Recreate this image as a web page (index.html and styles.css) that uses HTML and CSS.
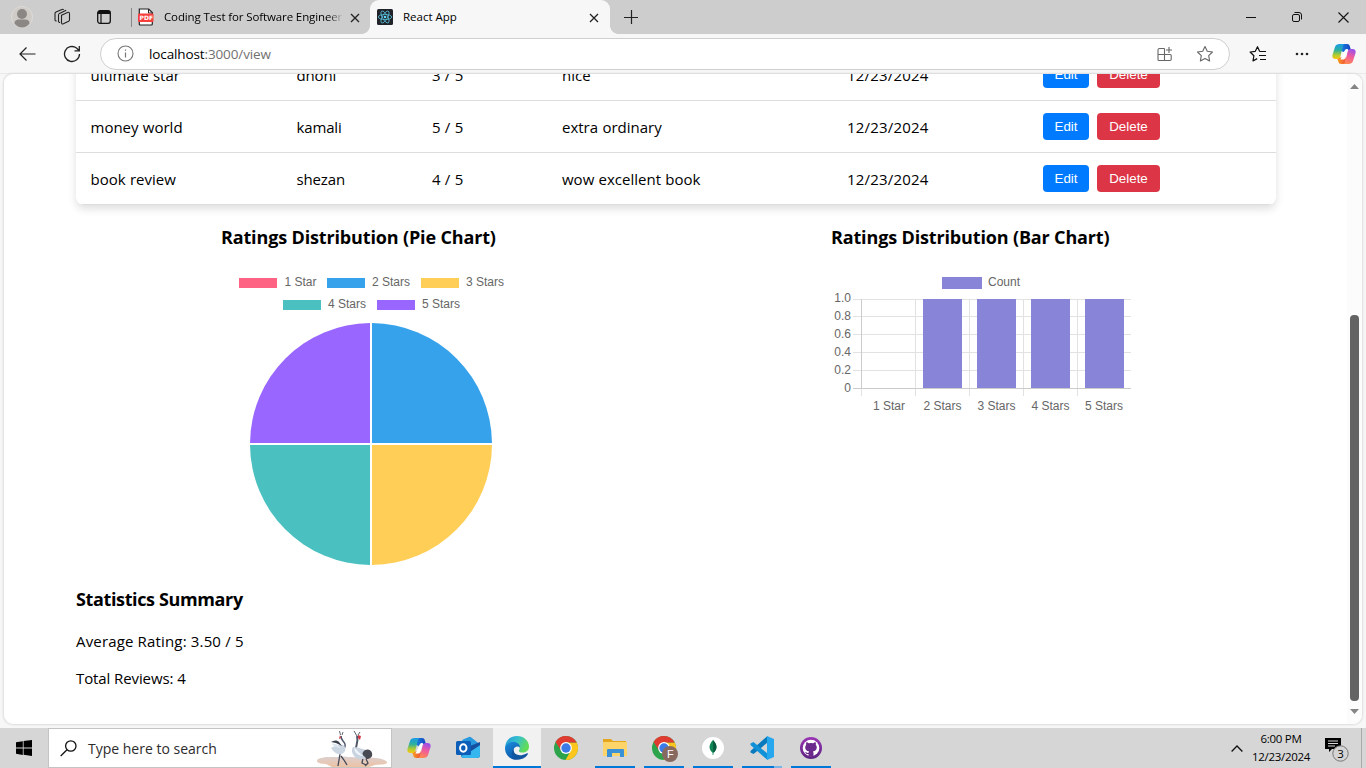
FILE: index.html
```html
<!DOCTYPE html>
<html lang="en">
<head>
<meta charset="utf-8">
<title>React App</title>
<link rel="stylesheet" href="styles.css">
</head>
<body>
<svg class="defs" width="0" height="0">
  <defs>
    <linearGradient id="cpA" x1="0" y1="0" x2="0" y2="1"><stop offset="0" stop-color="#1b9be8"/><stop offset=".4" stop-color="#2bb0a0"/><stop offset=".75" stop-color="#b6cc2c"/><stop offset="1" stop-color="#fbc512"/></linearGradient>
    <linearGradient id="cpB" x1=".6" y1="0" x2=".3" y2="1"><stop offset="0" stop-color="#9a50e8"/><stop offset=".45" stop-color="#ee5aa0"/><stop offset="1" stop-color="#ff8a4c"/></linearGradient>
    <linearGradient id="cpC" x1="0" y1="0" x2="1" y2="0"><stop offset="0" stop-color="#1a8be6"/><stop offset="1" stop-color="#1544c0"/></linearGradient>
    <linearGradient id="cpD" x1="0" y1="0" x2="1" y2="0"><stop offset="0" stop-color="#f7a01c"/><stop offset="1" stop-color="#f0503c"/></linearGradient>
    <linearGradient id="edA" x1="0" y1="0" x2="1" y2=".4"><stop offset="0" stop-color="#2394d8"/><stop offset=".5" stop-color="#35bfd0"/><stop offset="1" stop-color="#62dc58"/></linearGradient>
    <linearGradient id="edB" x1="0" y1="0" x2=".6" y2="1"><stop offset="0" stop-color="#1a8fdf"/><stop offset="1" stop-color="#0c4fa0"/></linearGradient>
    <linearGradient id="ground" x1="0" y1="0" x2="0" y2="1"><stop offset="0" stop-color="#dccfd0"/><stop offset="1" stop-color="#ecc3a4"/></linearGradient>
    <linearGradient id="ghG" x1="0" y1="0" x2="0" y2="1"><stop offset="0" stop-color="#9a35b5"/><stop offset="1" stop-color="#5c2380"/></linearGradient>
    <symbol id="copilot" viewBox="0 0 24 24">
      <path fill="url(#cpC)" d="M7 2h8c1.700 0 2.400.9 2.800 2.200L19 8h-3.500c-1.600 0-2.600.8-3 2.200L9 9z"/>
      <path fill="url(#cpD)" d="M5 16l6-1 2.200-1 .8 3-1 5H9.200c-1.700 0-2.400-.8-2.800-2.200z"/>
      <path fill="url(#cpA)" d="M7.500 2H13c-1.200.2-1.800 1.200-2.200 2.500L8.500 14c-.5 2-1.500 3-3 3h-2C.8 17-.2 15 .6 12.400L3 5C3.800 2.800 5.300 2 7.500 2z"/>
      <path fill="url(#cpB)" d="M16.500 22H11c1.200-.2 1.800-1.200 2.200-2.500L15.500 10c.5-2 1.500-3 3-3h2c2.700 0 3.700 2 2.900 4.600L21 19c-.8 2.200-2.300 3-4.500 3z"/>
      <path fill="#fff" d="M12.700 8.500c.6-1.100 1.500-1.500 3.300-1.500l-.7 2.500-1.900 6.800c-.6 1-1.200 1.200-2.600 1.200H8.300c.5-.5.900-1.300 1.200-2.300z"/>
    </symbol>
    <symbol id="chrome" viewBox="0 0 24 24">
      <circle cx="12" cy="12" r="12" fill="#2da44b"/>
      <path fill="#fcc61d" d="M12 6.500h10.700A12 12 0 0 1 11.500 24l5.300-9.200z"/>
      <path fill="#df3b30" d="M1.600 6a12 12 0 0 1 21 .5H12L7.200 14.800z"/>
      <circle cx="12" cy="12" r="5.900" fill="#fff"/><circle cx="12" cy="12" r="4.700" fill="#3b7be8"/>
    </symbol>
    <symbol id="close" viewBox="0 0 10 10"><path d="M1 1l8 8M9 1L1 9" fill="none" stroke="#222" stroke-width="1.300"/></symbol>
  </defs>
</svg>

<header class="tabstrip">
  <div class="profile"><svg width="22" height="22" viewBox="0 0 22 22"><circle cx="11" cy="11" r="10.500" fill="#cfcbc6" stroke="#dedbd7"/><circle cx="11" cy="8" r="5" fill="#8b8784"/><path d="M3.500 17.500c0-3 2-4 4-4h7c2 0 4 1 4 4-2 2.700-4.500 4-7.500 4s-5.500-1.300-7.500-4z" fill="#8b8784"/></svg></div>
  <div class="workspaces"><svg width="18" height="18" viewBox="0 0 18 18" fill="none" stroke="#222" stroke-width="1.100"><path d="M8.500 7.200l6-2.700q2-.8 2 1.200v6q0 1-.9 1.500l-5.200 2.500q-1.900.8-1.900-1.200zM5.500 13.500V7q0-1 1-1.600l6.700-3.100M5.500 13.500q.3 1.300 1.600.8M2 12V5.500Q2 4.500 3 4l6-2.600q1-.4 1.600.4M2 12q.2 1.300 1.600.8"/></svg></div>
  <div class="tabactions"><svg width="14" height="14" viewBox="0 0 14 14"><rect x=".7" y=".7" width="12.600" height="12.600" rx="2.200" fill="none" stroke="#111" stroke-width="1.300"/><path d="M1 1h12v3H1z" fill="#111"/><path d="M4 4v9" stroke="#111" stroke-width="1.200"/></svg></div>
  <div class="tab">
    <svg width="16" height="18" viewBox="0 0 16 18"><path d="M1.700 1h9l3.600 3.600V16q0 1-1 1h-11q-1 0-1-1V1z" fill="#fff" stroke="#222" stroke-width="1.200"/><path d="M10.500 1v4h4" fill="none" stroke="#222"/><rect x="0" y="5.500" width="15.500" height="8.500" rx="1" fill="#f7403d"/><text x="1.600" y="12" class="pdf-text">PDF</text></svg>
    <span class="tab-title fade">Coding Test for Software Engineer</span>
    <svg class="tab-close" width="10" height="10"><use href="#close"/></svg>
  </div>
  <div class="tab active">
    <svg width="16" height="16" viewBox="0 0 16 16"><rect width="16" height="16" rx="1.500" fill="#20232a"/><g fill="none" stroke="#55b9d3" stroke-width=".85"><ellipse cx="8" cy="8" rx="6.700" ry="2.600"/><ellipse cx="8" cy="8" rx="6.700" ry="2.600" transform="rotate(60 8 8)"/><ellipse cx="8" cy="8" rx="6.700" ry="2.600" transform="rotate(120 8 8)"/></g><circle cx="8" cy="8" r="1.300" fill="#61dafb"/></svg>
    <span class="tab-title">React App</span>
    <svg class="tab-close" width="10" height="10"><use href="#close"/></svg>
  </div>
  <div class="newtab"><svg width="14" height="14" viewBox="0 0 14 14"><path d="M7.500 0v14M0 7.500h14" stroke="#222" stroke-width="1.200"/></svg></div>
  <div class="winbtns">
    <svg width="10" height="10" viewBox="0 0 10 10"><path d="M0 5.500h10" stroke="#111"/></svg>
    <svg width="10" height="10" viewBox="0 0 10 10" fill="none" stroke="#111"><rect x=".5" y="2.500" width="7" height="7" rx="1.500"/><path d="M2.500.5H7q2.500 0 2.500 2.500v4.500"/></svg>
    <svg width="11" height="11" viewBox="0 0 11 11"><path d="M.5.5l10 10M10.500.5l-10 10" stroke="#111" stroke-width="1.100"/></svg>
  </div>
</header>

<nav class="toolbar">
  <svg class="back" width="17" height="14" viewBox="0 0 17 14" fill="none" stroke="#222" stroke-width="1.200"><path d="M16.500 7H1M7.500.5L1 7l6.500 6.500"/></svg>
  <svg class="reload" width="18" height="18" viewBox="0 0 18 18" fill="none" stroke="#222" stroke-width="1.300"><path d="M16.500 9A7.500 7.500 0 1 1 13.500 3L16 5.500M16.300 1v4.800h-4.800"/></svg>
  <div class="address">
    <svg width="17" height="17" viewBox="0 0 17 17"><circle cx="8.500" cy="8.500" r="7.500" fill="none" stroke="#767676" stroke-width="1.100"/><path d="M8.500 7.500v5M8.500 4.500v1.300" stroke="#767676" stroke-width="1.200"/></svg>
    <span class="url">localhost<span class="path">:3000/view</span></span>
    <svg class="apps" width="16" height="16" viewBox="0 0 16 16" fill="none" stroke="#666" stroke-width="1.100"><path d="M7.500 2.500H2.500q-1.500 0-1.500 1.500v9.500q0 1 1 1h11q1.200 0 1.200-1.200V9.500q0-1-1-1H1M7.500 2.500v12M12 1v6M9 4h6"/></svg>
    <svg class="star" width="18" height="18" viewBox="0 0 18 18" fill="none" stroke="#666" stroke-width="1.100"><path d="M9 1.500l2.300 4.800 5.200.7-3.800 3.700.9 5.200L9 13.400l-4.600 2.500.9-5.200L1.500 7l5.200-.7z" stroke-linejoin="round"/></svg>
  </div>
  <svg class="favs" width="18" height="18" viewBox="0 0 18 18" fill="none" stroke="#111" stroke-width="1.200"><path d="M10.700 6.500L8.500 1.700 6.300 6.300l-5.200.7 3.800 3.700-.9 5.200 4.200-2.300M10.700 6.500H17M10 10.500h7M11 14.500h6" stroke-linejoin="round"/></svg>
  <svg class="more" width="14" height="4" viewBox="0 0 14 4" fill="#222"><circle cx="2" cy="2" r="1.300"/><circle cx="7" cy="2" r="1.300"/><circle cx="12" cy="2" r="1.300"/></svg>
  <svg width="24" height="24"><use href="#copilot"/></svg>
</nav>

<main class="viewport">
  <div class="page">
    <div class="reviews">
      <div class="row"><span>ultimate star</span><span>dhoni</span><span>3 / 5</span><span>nice</span><span>12/23/2024</span><div class="actions"><button class="btn edit">Edit</button><button class="btn delete">Delete</button></div></div>
      <div class="row"><span>money world</span><span>kamali</span><span>5 / 5</span><span>extra ordinary</span><span>12/23/2024</span><div class="actions"><button class="btn edit">Edit</button><button class="btn delete">Delete</button></div></div>
      <div class="row"><span>book review</span><span>shezan</span><span>4 / 5</span><span>wow excellent book</span><span>12/23/2024</span><div class="actions"><button class="btn edit">Edit</button><button class="btn delete">Delete</button></div></div>
    </div>
    <div class="charts">
      <section class="chart">
        <h3>Ratings Distribution (Pie Chart)</h3>
        <svg width="300" height="300" viewBox="0 0 300 300" class="chart-svg">
          <g><rect x="18" y="7" width="38" height="10" fill="#ff6384"/><rect x="106" y="7" width="38" height="10" fill="#36a2eb"/><rect x="200" y="7" width="38" height="10" fill="#ffce56"/><rect x="62" y="29" width="38" height="10" fill="#4bc0c0"/><rect x="156" y="29" width="38" height="10" fill="#9966ff"/></g>
          <text x="63.500" y="15">1 Star</text><text x="151" y="15">2 Stars</text><text x="245" y="15">3 Stars</text><text x="107" y="37">4 Stars</text><text x="201" y="37">5 Stars</text>
          <path d="M151 172V52a121 121 0 0 1 120 120z" fill="#36a2eb"/>
          <path d="M151 174h120a121 121 0 0 1-120 120z" fill="#ffce56"/>
          <path d="M149 174v120A121 121 0 0 1 29 174z" fill="#4bc0c0"/>
          <path d="M149 172H29A121 121 0 0 1 149 52z" fill="#9966ff"/>
        </svg>
      </section>
      <section class="chart">
        <h3>Ratings Distribution (Bar Chart)</h3>
        <svg width="301" height="150" viewBox="0 0 301 150" class="chart-svg">
          <rect x="111" y="6" width="40" height="12" fill="#8884d8"/><text x="157" y="15">Count</text>
          <path d="M22 28.500h278M22 45.500h278M22 63.500h278M22 81.500h278M22 99.500h278M84.500 28v97M138.500 28v97M192.500 28v97M246.500 28v97M30.500 117v8" stroke="#e2e2e2"/>
          <path d="M22 117.500h278M30.500 28v90" stroke="#cbcbcb"/>
          <g fill="#8884d8"><rect x="92" y="28" width="39" height="89"/><rect x="146" y="28" width="39" height="89"/><rect x="200" y="28" width="39" height="89"/><rect x="254" y="28" width="39" height="89"/></g>
          <g text-anchor="end"><text x="20" y="31">1.0</text><text x="20" y="49">0.8</text><text x="20" y="67">0.6</text><text x="20" y="85">0.4</text><text x="20" y="103">0.2</text><text x="20" y="121">0</text></g>
          <g text-anchor="middle"><text x="58" y="139">1 Star</text><text x="111.500" y="139">2 Stars</text><text x="165.500" y="139">3 Stars</text><text x="219.500" y="139">4 Stars</text><text x="273" y="139">5 Stars</text></g>
        </svg>
      </section>
    </div>
    <section class="summary">
      <h3>Statistics Summary</h3>
      <p>Average Rating: 3.50 / 5</p>
      <p>Total Reviews: 4</p>
    </section>
  </div>
  <div class="scrollbar">
    <svg width="9" height="5" viewBox="0 0 9 5"><path d="M4.500 0L9 5H0z" fill="#858585"/></svg>
    <div class="thumb"></div>
    <svg width="9" height="5" viewBox="0 0 9 5"><path d="M4.500 5L9 0H0z" fill="#858585"/></svg>
  </div>
</main>

<footer class="taskbar">
  <div class="start"><svg width="16" height="16" viewBox="0 0 16 16"><path d="M0 2.300L6.800 1.200v6.400H0zM7.600 1.100L16 0v7.600H7.600zM0 8.400h6.800v6.500L0 13.800zM7.600 8.400H16V16l-8.400-1.200z"/></svg></div>
  <div class="search">
    <svg width="17" height="17" viewBox="0 0 17 17" fill="none" stroke="#111" stroke-width="1.300"><circle cx="10.800" cy="6" r="5.200"/><path d="M7 9.800L.7 16"/></svg>
    <span>Type here to search</span>
    <svg class="cranes" width="72" height="36" viewBox="0 0 72 36">
      <path d="M1 30c0-3 5-3 9-4h12c4-1 8 0 13 0l14 1c7-1 20 0 22 4 1 3-9 2-12 3l-6 2H16l-6-3c-5 0-9-1-9-3z" fill="url(#ground)"/>
      <path d="M24 23l-1 6-1 6M25 25l3 4 3 5" fill="none" stroke="#454955" stroke-width="1.300"/>
      <path d="M28 17c2-2 1-5-1-7-2-2-2-3-2-5" fill="none" stroke="#50576a" stroke-width="1.600"/><path d="M24.500 4l-1-4M26 4l1-3" stroke="#38404e" stroke-width=".8"/><path d="M24 4l-1 4 2-1z" fill="#c8353e"/>
      <path d="M15 17c4-2 8-4 12-3 4 2 3 8-2 9-4 1-7-2-10-6z" fill="#cbd6e2"/><path d="M15 11c3-2 6-2 8 0l3 4-6-3z" fill="#39404c"/><path d="M16 13c3-1 6 0 9 4-4-1-7-1-9-4z" fill="#dfe8f1"/>
      <path d="M47 27l-1 5 4 2M50 28l2 4-3 3" fill="none" stroke="#454955" stroke-width="1.300"/>
      <path d="M40 20c-1-6 3-8 1-15" fill="none" stroke="#505868" stroke-width="2"/><path d="M41 5l-3-5M42 4l2-3" stroke="#343c49" stroke-width=".8"/><path d="M42 4l3 1-1 4-2-2z" fill="#d33843"/>
      <path d="M37 16c5 0 9 2 13 3 4 2 5 5 2 7-4 3-10 3-13 0-3-3-4-7-2-10z" fill="#c9d3df"/><path d="M38 17c4 2 5 6 10 8-5 0-9-2-10-8z" fill="#eff4fa"/><path d="M47 21c3-4 8-3 9 1 1 4-2 6-6 6 0-3-5-3-3-7z" fill="#474a52"/>
    </svg>
  </div>
  <div class="apps-row">
    <div class="app"><svg width="24" height="24"><use href="#copilot"/></svg></div>
    <div class="app"><svg width="24" height="24" viewBox="0 0 24 24"><path d="M5 7l9-5.500L24 9v10q0 3-3 3H8q-3 0-3-3z" fill="#1265b5"/><path d="M6 5q0-1 1-1.500L13 1q1-.4 2 .2L23.500 8 15 13z" fill="#2899df"/><path d="M24 9v10q0 3-3 3H8q-2 0-3-2l10-5z" fill="#35b6ee"/><path d="M14 10l10-4v3l-9 6z" fill="#154f9e"/><rect y="5" width="15" height="14" rx="1.500" fill="#0c5eb8"/><ellipse cx="7.300" cy="12" rx="3.200" ry="3.700" fill="none" stroke="#fff" stroke-width="2"/></svg></div>
    <div class="app current"><svg width="24" height="24" viewBox="0 0 24 24"><path d="M.3 10C1 3.500 6 0 12 0c7 0 12 5 12 10.500 0 4-3 6-6.500 6-3 0-4-1-3.500-2 2-3-.5-6-4-6C6 8.500 3 10 0 14z" fill="url(#edA)"/><path d="M0 13C0 8 4.500 6 8.500 6c4 0 6.500 2.500 6.500 5.500-2-2-6-1-6.500 2.500-.7 5 4.500 9 10 7.500C13 26 1 24 0 13z" fill="url(#edB)"/><path d="M8.700 13c-1 5 5 8.500 12.800 4.500 1.500-.6 1.800.2 1.200 1C19 24 12 24.500 9 21.500 6 19 6.200 15 8.700 13z" fill="#12569f"/></svg></div>
    <div class="app"><svg width="24" height="24"><use href="#chrome"/></svg></div>
    <div class="app open"><svg width="24" height="20" viewBox="0 0 24 20"><path d="M0 1h8l2 2h13v5H0z" fill="#e5a51c"/><path d="M1 4h23v14H0V5q0-1 1-1z" fill="#fcd46a"/><path d="M4 19v-7q0-1 1-1h15q1 0 1 1v7h-4v-4H9v4z" fill="#3a91d5"/></svg></div>
    <div class="app open"><svg width="26" height="26" viewBox="0 0 26 26" class="chrome-badge"><use href="#chrome" width="24" height="24"/><circle cx="18" cy="18" r="8" fill="#87695f"/><text x="15" y="22" class="badge-letter">F</text></svg></div>
    <div class="app open"><svg width="22" height="22" viewBox="0 0 22 22"><circle cx="11" cy="11" r="11" fill="#fff"/><path d="M11 3c6 6 3 11 .4 12.700V18h-.8v-2.300C6 12 7 7 11 3z" fill="#108654"/><path d="M11 3c6 6 3 11 .3 12.700z" fill="#075a3d"/></svg></div>
    <div class="app open grouped"><svg width="24" height="24" viewBox="0 0 24 24"><path d="M17.500 0v6.500L3.500 18 .5 16.500V15z" fill="#087abd"/><path d="M17.500 24v-6.500L3.500 6 .5 7.500V9z" fill="#1091d8"/><path d="M17 0l7 3v18l-7 3z" fill="#27a7ee"/></svg></div>
    <div class="app open"><svg width="22" height="22" viewBox="0 0 22 22"><circle cx="11" cy="11" r="11" fill="url(#ghG)"/><circle cx="11" cy="11" r="8.300" fill="#fff"/><path d="M8.500 19.500v-2.500c-2 .4-2.800-.5-3.500-1.800 1.500-.2 1.700 1 3.500.6l.6-1.200c-2.300-.5-3.900-1.600-3.900-4.100 0-1.100.4-2 1-2.700-.2-.9-.2-1.700.2-2.500 1 0 1.700.5 2.400 1q2.200-.5 4.400 0c.7-.5 1.400-1 2.400-1 .4.800.4 1.600.2 2.500.6.700 1 1.600 1 2.700 0 2.500-1.600 3.600-3.900 4.100.4.500.6 1.100.6 1.900v3z" fill="#6c2a8c"/></svg></div>
  </div>
  <div class="tray">
    <svg class="chev" width="12" height="7" viewBox="0 0 12 7"><path d="M.6 6.500L6 1l5.400 5.500" fill="none" stroke="#111" stroke-width="1.300"/></svg>
    <div class="clock"><span>6:00 PM</span><span>12/23/2024</span></div>
    <svg class="notif" width="25" height="26" viewBox="0 0 25 26"><path d="M0 1h16v11H7l-3 3v-3H0z" fill="#000"/><path d="M3 4h10M3 6.500h10M3 9h7" stroke="#d6d6d6"/><circle cx="15.500" cy="16.500" r="7.700" fill="#d4d4d4" stroke="#777"/><text x="12.300" y="20.500" class="notif-count">3</text></svg>
    <div class="show-desktop"></div>
  </div>
</footer>
</body>
</html>
```
FILE: styles.css
```css
* { box-sizing: border-box; }
body { margin: 0; width: 1366px; height: 768px; overflow: hidden; display: flex; flex-direction: column; background: #f7f7f7; font-family: "Open Sans", "Noto Sans", sans-serif; color: #000; }
svg { display: block; flex: none; }
.defs { position: absolute; }

.tabstrip { height: 34px; flex: none; display: flex; align-items: center; background: #cdcdcd; }
.profile { padding-left: 11px; width: 53px; }
.workspaces { width: 44px; }
.tabactions { width: 34px; }
.tab { width: 239px; height: 34px; display: flex; align-items: center; padding-left: 7px; position: relative; }
.tab:not(.active)::before { content: ""; position: absolute; left: 0; top: 8px; width: 1px; height: 19px; background: #888; }
.tab.active { width: 240px; background: #f7f7f7; border-radius: 9px 9px 0 0; }
.tab.active::before, .tab.active::after { content: ""; position: absolute; bottom: 0; width: 8px; height: 8px; }
.tab.active::before { left: -8px; background: radial-gradient(circle at 0 0, transparent 7.500px, #f7f7f7 8px); }
.tab.active::after { right: -8px; background: radial-gradient(circle at 100% 0, transparent 7.500px, #f7f7f7 8px); }
.tab-title { width: 178px; margin-left: 10px; white-space: nowrap; font-size: 11.500px; letter-spacing: -0.120px; line-height: 18px; }
.tab.active .tab-title { width: 186px; }
.fade { -webkit-mask-image: linear-gradient(90deg, #000 164px, transparent 179px); mask-image: linear-gradient(90deg, #000 164px, transparent 179px); }
.tab.active .tab-title { letter-spacing: 0; }
.tab-close { margin-left: 8px; margin-top: 1px; }
.tab.active .tab-close { margin-left: 0; }
.pdf-text { font: bold 6px "DejaVu Sans", sans-serif; fill: #fff; }
.newtab { margin-left: 14px; }
.winbtns { margin-left: auto; padding-right: 17px; display: flex; align-items: center; gap: 36px; }

.toolbar { height: 40px; flex: none; display: flex; align-items: center; padding-left: 19px; background: #f7f7f7; border-bottom: 1px solid #e9e9e9; }
.reload { margin-left: 27px; }
.address { width: 1130px; height: 32px; margin-left: 19px; display: flex; align-items: center; background: #fff; border: 1px solid #cfcfcf; border-radius: 16px; padding-left: 16px; }
.url { margin-left: 15px; font-size: 13.500px; letter-spacing: -0.120px; }
.path { color: #717171; }
.apps { margin-left: auto; }
.star { margin: 0 15px 0 23px; }
.favs { margin-left: 19px; }
.more { margin: 0 24px 0 28px; }
.more + svg { margin-left: -1px; }

.viewport { height: 650px; flex: none; margin: 0 4px; display: flex; justify-content: space-between; overflow: hidden; background: #fff; border-radius: 9px; box-shadow: 0 0 2px 1px #dcdcdc; }
.page { width: 1200px; margin-left: 72px; }
.reviews { margin-top: -25px; border-radius: 0 0 8px 8px; overflow: hidden; box-shadow: 0 4px 8px rgba(0,0,0,.13); }
.row { height: 52px; display: grid; grid-template-columns: 206px 135px 130px 285px 196px 248px; align-items: center; border-bottom: 1px solid #ddd; font-size: 15px; letter-spacing: 0; word-spacing: .4px; }
.row > * { padding-left: 15px; line-height: 20px; }
.row > .actions { display: flex; gap: 8px; }
.row > span:first-child { padding-left: 14.500px; }
.row > span:nth-child(2) { padding-left: 14.500px; letter-spacing: -0.150px; }
.row > span:nth-child(5) { letter-spacing: .180px; }
.btn { height: 27px; border: 0; padding: 0; border-radius: 4px; color: #fff; font: 13.333px "Liberation Sans", Arial, sans-serif; }
.edit { width: 46px; background: #007bff; }
.delete { width: 63px; background: #dc3545; }

.charts { display: flex; padding-left: 145px; gap: 310px; }
.chart { width: 300px; height: 374px; flex: none; }
h3 { margin: 0; font-size: 18px; font-weight: 700; line-height: 26px; letter-spacing: -0.370px; white-space: nowrap; }
.chart h3 { margin-top: 19px; margin-bottom: 21px; letter-spacing: -0.150px; }
.chart-svg text { font: 12px "Liberation Sans", Arial, sans-serif; fill: #666; }
.summary { padding-top: 7px; }
.summary p { margin: 0; font-size: 15px; line-height: 22px; letter-spacing: -0.100px; }
.summary h3 + p { margin-top: 18px; margin-bottom: 15px; letter-spacing: .160px; }

.scrollbar { width: 15px; background: #fcfcfc; display: flex; flex-direction: column; align-items: center; padding: 10px 0; }
.thumb { width: 9px; height: 386px; margin-top: 226px; margin-bottom: 8px; border-radius: 4px; background: #636363; }

.taskbar { height: 40px; flex: none; margin-top: 4px; display: flex; background: #d6d6d6; }
.start { width: 48px; display: flex; align-items: center; padding-left: 16px; }
.search { width: 344px; height: 40px; display: flex; align-items: center; background: #fff; border: 1px solid #c4c4c4; padding-left: 11px; font-size: 14px; letter-spacing: 0; color: #2c2c2c; }
.search span { margin-left: 11px; }
.cranes { margin-left: auto; margin-right: 3px; align-self: flex-end; }
.apps-row { display: flex; gap: 1px; margin-left: 3px; }
.app { width: 48px; height: 40px; display: flex; align-items: center; justify-content: center; position: relative; }
.app.current { background: #f1f1f1; }
.app.current::after, .app.open::after { content: ""; position: absolute; left: 4px; right: 4px; bottom: 0; height: 2px; background: #0078d7; }
.app.current::after { left: 0; right: 0; }
.app.grouped::after { background: linear-gradient(90deg, #0078d7 32px, #7ab5e6 32px); }
.chrome-badge { margin: 2px 0 0 2px; }
.badge-letter { font: 11px "Liberation Sans", Arial, sans-serif; fill: #fff; }
.tray { margin-left: auto; display: flex; align-items: center; }
.clock { width: 74px; margin-left: 1px; display: flex; flex-direction: column; align-items: center; font-size: 11.500px; line-height: 18px; letter-spacing: -0.280px; }
.notif { margin: 3px 0 0 7px; }
.notif-count { font: 11.500px "Open Sans", sans-serif; fill: #000; }
.show-desktop { width: 5px; height: 40px; margin-left: 11px; border-left: 1px solid #aaa; }
```
